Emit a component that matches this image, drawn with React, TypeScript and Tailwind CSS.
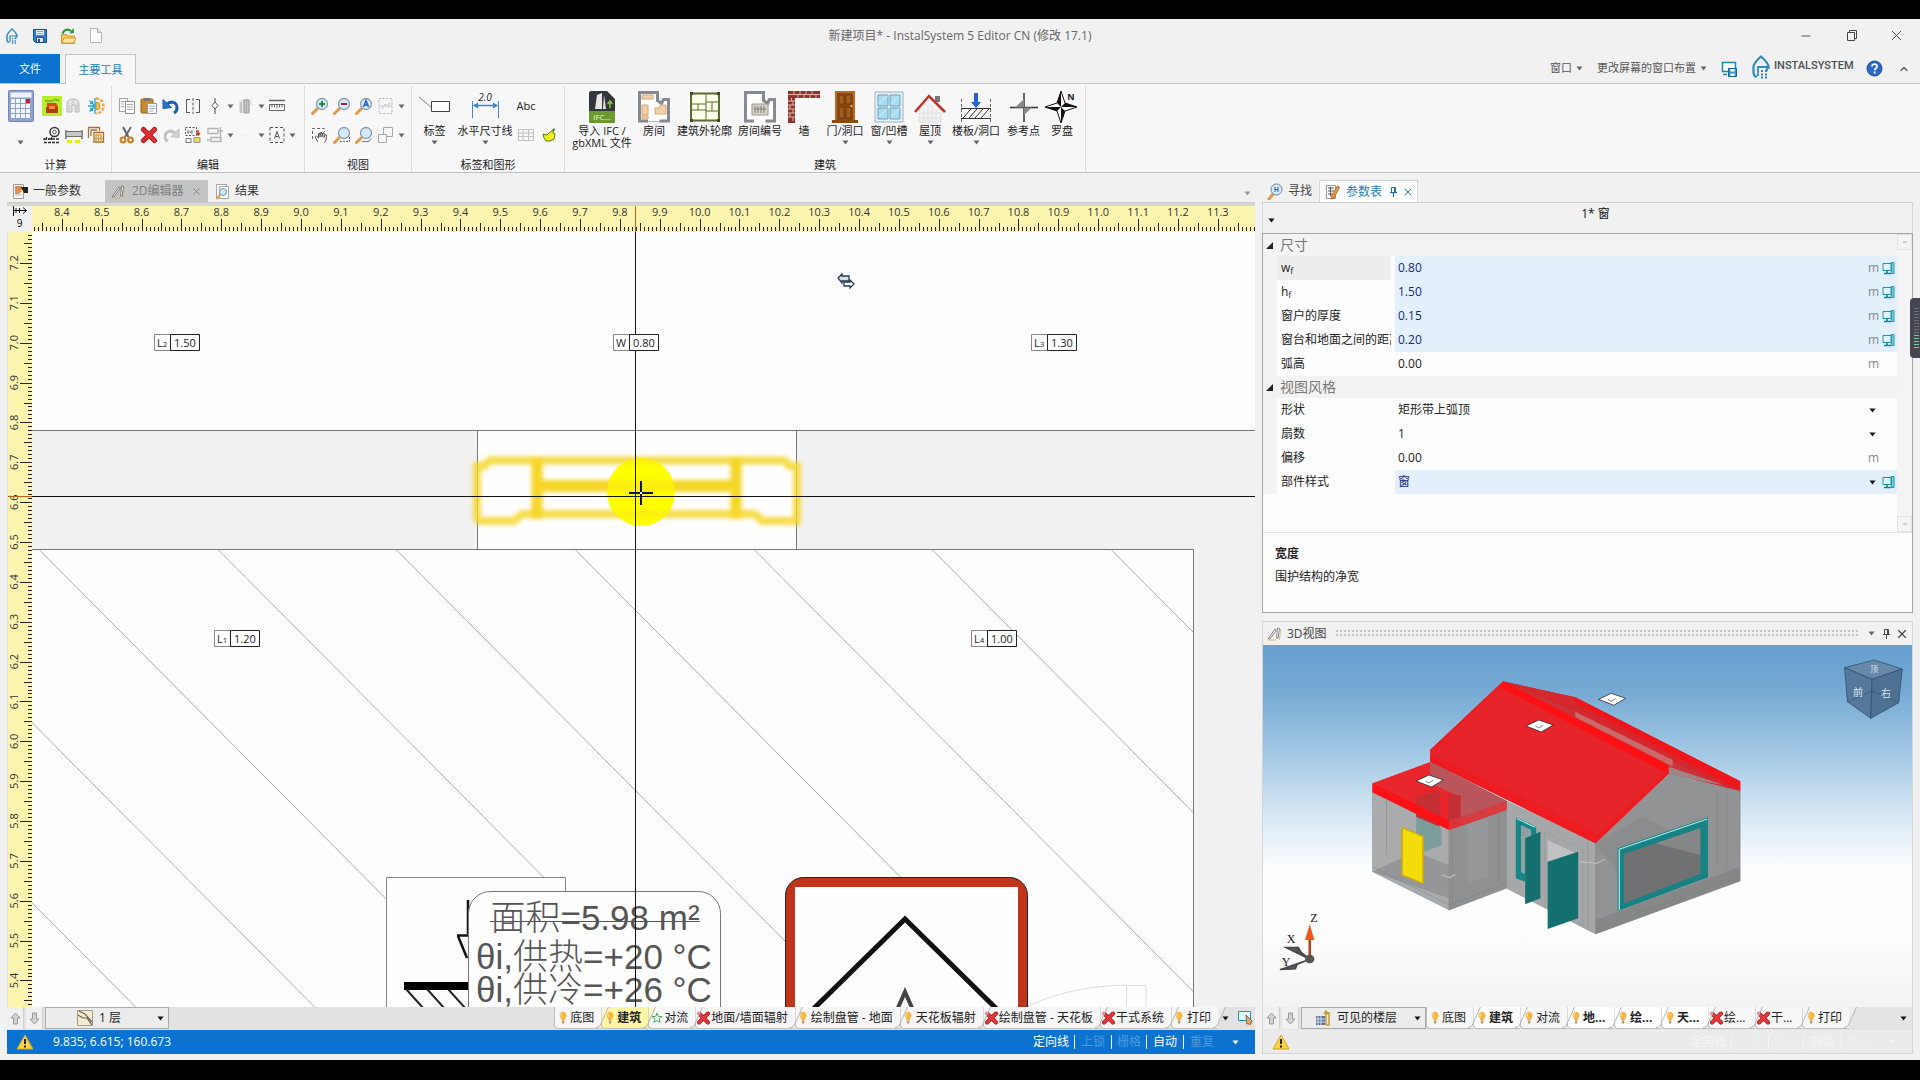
import React from "react";
import { clsx } from "clsx";
import { LuMinus, LuX, LuChevronUp } from "react-icons/lu";

const PX_PER_TENTH = 39.86;

type IconProps = { w?: number; h?: number; children?: React.ReactNode };

const Ic = ({ w = 18, h = 18, children }: IconProps) => (
  <svg
    width={w}
    height={h}
    viewBox={`0 0 ${w} ${h}`}
    fill="none"
    className="shrink-0"
    aria-hidden="true"
  >
    {children}
  </svg>
);

const Caret = ({ color = "#666" }: { color?: string }) => (
  <Ic w={7} h={5}>
    <path d="M0.5 0.5h6L3.5 4.5z" fill={color} />
  </Ic>
);

const Bulb = () => (
  <Ic w={10} h={14}>
    <path d="M5 1a3.4 3.4 0 0 1 2 6l-.6 2H3.8L3.2 7A3.4 3.4 0 0 1 5 1z" fill="#f6b73c" stroke="#e9a02c" strokeWidth=".5" />
    <path d="M4 2.5c-1 .6-1 2-.5 3" stroke="#fff3c4" />
    <path d="M3.9 9.5h2.4v2.5l-1.2 1-1.2-1z" fill="#b9a070" />
  </Ic>
);

const RedX = () => (
  <Ic w={13} h={14}>
    <path d="M2 2.5l9 9M11 2.5l-9 9" stroke="#a81217" strokeWidth="4" strokeLinecap="round" />
    <path d="M2 2.5l9 9M11 2.5l-9 9" stroke="#e8383c" strokeWidth="2.5" strokeLinecap="round" />
  </Ic>
);

const Star = () => (
  <Ic w={12} h={14}>
    <path d="M6 2l1.3 3.4 3.7.2-2.9 2.3 1 3.6L6 9.5l-3.1 2 1-3.6L1 5.6l3.7-.2z" fill="#effbe9" stroke="#4fa564" />
  </Ic>
);

const Warning = () => (
  <Ic w={18} h={16}>
    <path d="M9 1L17 15H1z" fill="#fbd44a" stroke="#d9a21c" strokeLinejoin="round" />
    <path d="M9 5v5M9 11.5v2" stroke="#222" strokeWidth="2" />
  </Ic>
);

const Monitor = () => (
  <Ic w={13} h={14}>
    <path d="M1 2.5h8v7H1z" fill="#d9f5fb" stroke="#1d93ab" />
    <path d="M9.5 1.5h2.5v11H9.500z" fill="#7fd3e0" stroke="#1d93ab" />
    <path d="M5 9v3M2 12.5h7" stroke="#1d7f95" strokeWidth="1.5" />
  </Ic>
);

const Pin = ({ color = "#444" }: { color?: string }) => (
  <Ic w={9} h={12}>
    <path d="M2.5 1.5h4v5h-4zM1 6.5h7M4.5 7v4M5.5 2v4" stroke={color} />
  </Ic>
);

const Pencils = ({ color = "#777" }: { color?: string }) => (
  <Ic w={16} h={15}>
    <path d="M1 13L8 3l1.5 1L3 13z" fill="#eee" stroke={color} />
    <path d="M9.5 12l1-10 2 .3-1.5 10z" fill="#fff" stroke={color} />
    <path d="M1 14h8M13.5 3l-1 11" stroke="#c8b878" />
  </Ic>
);

const SmallSave = () => (
  <Ic w={16} h={16}>
    <path d="M1.5 1.5h13v13h-11l-2-2z" fill="#2f7fd0" stroke="#1b4f8c" />
    <path d="M4 2h8v5H4z" fill="#e8f2fb" />
    <path d="M5 3.5h6M5 5.5h6" stroke="#7fa8cc" />
    <path d="M4.5 9.5h7v5h-7z" fill="#dfe7ef" stroke="#1b4f8c" />
    <path d="M6 11h2v3H6z" fill="#1b4f8c" />
  </Ic>
);

const OpenFolder = () => (
  <Ic w={17} h={18}>
    <path d="M1.5 7.5h5l1 1.5h7v7.5h-13z" fill="#f2c55b" stroke="#cb9a2e" />
    <path d="M2 16l2-5h12l-2 5z" fill="#fbe39a" stroke="#d6a63a" />
    <path d="M2.5 6.5C4 2.5 8 1.5 11 4" stroke="#23973a" strokeWidth="2.2" />
    <path d="M9.5 6.5L14 6l-.5-5z" fill="#23973a" />
  </Ic>
);

const BlankPage = () => (
  <Ic w={14} h={17}>
    <path d="M1.5 1.5h7l4 4v10h-11z" fill="#fff" stroke="#b5b5b5" />
    <path d="M8.5 1.5v4h4" fill="#ddd" stroke="#b5b5b5" />
  </Ic>
);

const HouseLogo = ({ w, h }: { w: number; h: number }) => (
  <svg width={w} height={h} viewBox="0 0 18 24" fill="none" className="shrink-0" aria-hidden="true">
    <path d="M5 21.5H3C1.5 20 1.5 18.5 1.5 17V11C3 7 6 4 9 1.5c3 2.5 6 5.5 7.5 9.5v3" stroke="#2b8ac4" strokeWidth="2.2" />
    <path d="M6 21v-9h9v4" stroke="#2b8ac4" strokeWidth="1.8" />
    <path d="M9 16h2M13 16h2M9 19.5h2M13 19.5h2M9 22.5h2M13 22.5h2" stroke="#2f7fae" strokeWidth="2" />
  </svg>
);

const Calculator = () => (
  <Ic w={26} h={32}>
    <rect x=".5" y=".5" width="25" height="31" rx="1" fill="#8fa3cf" stroke="#7385b5" />
    <rect x="2.5" y="2.5" width="21" height="5" fill="#eef2fa" />
    {[9, 14, 19, 24].map((y) =>
      [3, 8, 13, 18].map((x) => (
        <rect key={`${x}-${y}`} x={x} y={y} width="4" height="4" fill={x === 18 && y === 9 ? "#b02638" : "#f1f4fb"} />
      ))
    )}
  </Ic>
);

const Boiler = () => (
  <Ic w={20} h={20}>
    <rect width="20" height="20" fill="#b6ee2c" />
    <path d="M5 7h9l2 3v6H5z" fill="#d9481c" />
    <path d="M4 11h12v6H4z" fill="#a8420f" />
    <path d="M7 10h6v3H7z" fill="#f58a3c" />
    <path d="M3 5h9M12 3c1 2 4 0 5 2" stroke="#7aa81c" strokeWidth="1.5" />
  </Ic>
);

const GrayPipe = () => (
  <Ic>
    <path d="M2 15V7c0-3 2-5 6-5s6 2 6 5v8h-4V8H7v7z" fill="#e2e2e2" stroke="#b7b7b7" />
    <path d="M4 15V8M12 15V7M8 3v5" stroke="#c9c9c9" />
  </Ic>
);

const SunFrost = () => (
  <Ic>
    <path d="M9 1.5a7.5 7.5 0 0 1 0 15" stroke="#f2a33a" strokeWidth="2.5" strokeDasharray="3 1.5" />
    <path d="M9 5a4 4 0 0 1 0 8z" fill="#f6c14a" stroke="#e08a24" />
    <path d="M8 1v16M1 9h7M2.5 3.5L8 9l-5.5 5.5M3 6.5h2.5V4M3 11.5h2.5V14" stroke="#2aa3c9" strokeWidth="1.3" />
  </Ic>
);

const Gauge = () => (
  <Ic>
    <circle cx="11.5" cy="6" r="4.5" stroke="#333" strokeWidth="1.5" />
    <circle cx="11.5" cy="6" r="1.8" stroke="#555" />
    <path d="M1 12v2M3.5 11v3M6 12v2M8.5 11v3M1 16.5h15M1 13h15" stroke="#333" strokeWidth="1.3" strokeDasharray="3 1" />
  </Ic>
);

const Duct = () => (
  <Ic>
    <path d="M1 4v9M17 4v9" stroke="#777" strokeWidth="1.5" />
    <path d="M1 5.5h16v5H1z" fill="#c9c9c9" stroke="#6e6e6e" />
    <path d="M2 15.5h5M10 15.5h5" stroke="#ecea1c" strokeWidth="3" />
  </Ic>
);

const Coils = () => (
  <Ic>
    <path d="M1.5 12V1.5h11V5M4 10V4h6" stroke="#a0703a" strokeWidth="1.3" />
    <path d="M7 6.5h9.5V16H7z" stroke="#a0703a" strokeWidth="1.3" />
    <path d="M9 16V9h5v7M11.5 9v7M7 12.5h9" stroke="#d8a23c" strokeWidth="1.3" />
  </Ic>
);

const Copy = () => (
  <Ic>
    <path d="M1.5 1.5h8v13h-8z" fill="#fff" stroke="#a3a3a3" />
    <path d="M7.5 4.5h9v12h-9z" fill="#fff" stroke="#8d8d8d" />
    <path d="M9 7.5h6M9 10h6M9 12.5h6M3 4.5h4M3 7h3M3 9.5h3" stroke="#a8a8a8" />
  </Ic>
);

const Paste = () => (
  <Ic>
    <rect x="1" y="2" width="12" height="14" rx="1" fill="#c98a2d" stroke="#94601a" />
    <path d="M4 1h6v3H4z" fill="#777" />
    <path d="M7.5 6.5h9v10h-9z" fill="#fff" stroke="#999" />
    <path d="M9 9h6M9 11.5h6M9 14h4" stroke="#9aaccc" />
  </Ic>
);

const Undo = () => (
  <Ic>
    <path d="M4 8c5-5 11-3 11 3 0 2-1 4-3 5" stroke="#1e5faa" strokeWidth="3" />
    <path d="M1 2.5v9l8.5-1z" fill="#2a78c8" stroke="#1e5faa" />
  </Ic>
);

const Redo = () => (
  <Ic>
    <path d="M14 8C9 3 3 5 3 11c0 2 1 3 2.5 4.5" stroke="#c2c2c2" strokeWidth="3" />
    <path d="M17 3v8.5L9 10.500z" fill="#d2d2d2" stroke="#bbb" />
  </Ic>
);

const Mirror = () => (
  <Ic>
    <path d="M6 2.5H2.5v13H6M12 2.5h3.5v13H12" stroke="#555" />
    <path d="M9 1v16" stroke="#555" strokeDasharray="3 1.5" />
  </Ic>
);

const AxisMark = () => (
  <Ic>
    <path d="M9 1v4M9 12v5" stroke="#444" />
    <path d="M9 5l3 3.5-3 3.5-3-3.5z" fill="#fff" stroke="#555" />
  </Ic>
);

const GrayBlock = () => (
  <Ic>
    <path d="M2 5l3-3h7l3 3v3h-2v8H2z" fill="#e2e2e2" />
    <path d="M7 3h5v13H7z" fill="#c6c6c6" stroke="#9a9a9a" />
    <path d="M4 5v11M9.5 4v11" stroke="#aaa" />
  </Ic>
);

const RulerIcon = () => (
  <Ic>
    <path d="M1 3.5h16" stroke="#666" strokeWidth="1.5" />
    <path d="M1.5 7.5h15v6h-15z" fill="#fff" stroke="#666" />
    <path d="M4 8v2.5M6.5 8v2.5M9 8v3.5M11.5 8v2.5M14 8v2.5" stroke="#666" />
  </Ic>
);

const Scissors = () => (
  <Ic>
    <path d="M5 1l5.5 10M13 1L7 11" stroke="#666" strokeWidth="2" />
    <circle cx="5" cy="14" r="2.4" stroke="#cf7c1c" strokeWidth="2" />
    <circle cx="12.5" cy="14" r="2.4" stroke="#cf7c1c" strokeWidth="2" />
  </Ic>
);

const BigRedX = () => (
  <Ic>
    <path d="M3.5 3.5l11 11M14.5 3.5l-11 11" stroke="#9c1518" strokeWidth="5" strokeLinecap="round" />
    <path d="M3.5 3.5l11 11M14.5 3.5l-11 11" stroke="#dd2f33" strokeWidth="3.5" strokeLinecap="round" />
  </Ic>
);

const Replace = () => (
  <Ic>
    <path d="M1.5 1.5h11v8h-11z" stroke="#555" strokeDasharray="2 1.5" />
    <path d="M4 4v4M8 4v4M4 6h4" stroke="#777" />
    <path d="M14 4v4M12.5 7l1.7 2L16 7" stroke="#c63b1c" strokeWidth="1.5" />
    <path d="M2 12.5h5v4H2z" stroke="#777" />
    <path d="M10 11.5h6v5h-6z" fill="#f3d84a" stroke="#999" />
  </Ic>
);

const Align = () => (
  <Ic>
    <path d="M2 2.5h10v5H2zM5 11.5h10v4H5zM14.5 1v15M1 14h3M12 5h5" stroke="#b4b4b4" strokeWidth="1.3" />
  </Ic>
);

const Faint = () => (
  <Ic>
    <path d="M3 12l4-4 3 2 5-5" stroke="#ececec" />
  </Ic>
);

const SelectA = () => (
  <Ic>
    <path d="M2 1.5h14v15H2z" stroke="#555" strokeDasharray="3 2" />
    <path d="M6.5 12.5L9 5.5l2.5 7M7.5 10.5h3" stroke="#555" />
  </Ic>
);

const Magnifier = ({ children }: { children?: React.ReactNode }) => (
  <Ic>
    <path d="M6.5 11.5L1.5 16.5" stroke="#df9a4c" strokeWidth="3" strokeLinecap="round" />
    <circle cx="11" cy="7" r="5.5" fill="#d4eaf8" stroke="#8d99a8" strokeWidth="1.3" />
    {children}
  </Ic>
);

const ZoomRegion = () => (
  <Ic>
    <path d="M2 1.5h13v15H2z" stroke="#b5b5b5" strokeDasharray="2 1.5" />
    <path d="M5 12l3-5 3 2 2-4M2 9h13" stroke="#c6c6c6" />
  </Ic>
);

const Hand = () => (
  <Ic>
    <path d="M1.5 13V2.5h12V6" stroke="#666" strokeDasharray="3 2" />
    <path d="M7 16l-3-5 1.5-.8L7.5 12V7.5H9V11l.3-4.5h1.5l.2 4.5.8-4h1.4l-.2 4.5 1.3-3 1.2.5L15 14l-1.5 2.5" fill="#fff" stroke="#555" />
  </Ic>
);

const Squares = () => (
  <Ic>
    <path d="M6.5 1.5h9v9h-9z" fill="#f4f4f4" stroke="#a7a7a7" />
    <path d="M1.5 8.5h8v8h-8z" fill="#f8f8f8" stroke="#a7a7a7" />
  </Ic>
);

const TagIcon = () => (
  <Ic w={34} h={32}>
    <path d="M1 6l13 11" stroke="#888" />
    <path d="M13.5 10.5h18v10h-18z" fill="#fff" stroke="#444" />
  </Ic>
);

const DimensionIcon = () => (
  <Ic w={34} h={32}>
    <text x="17" y="10" textAnchor="middle" fontSize="10" fontStyle="italic" fill="#222" fontFamily="Open Sans, sans-serif">
      2.0
    </text>
    <path d="M4.5 10v17M30.5 10v17" stroke="#3a87cc" />
    <path d="M6 14.5h23" stroke="#3a87cc" strokeWidth="1.5" />
    <path d="M5 14.5l5-3v6zM30 14.5l-5-3v6z" fill="#3a87cc" />
  </Ic>
);

const TableIcon = () => (
  <Ic>
    <path d="M1.5 3.5h15v11h-15zM1.5 7h15M1.5 10.5h15M6 3.5v11M11.5 3.5v11" stroke="#c1c1c1" />
  </Ic>
);

const Leaf = () => (
  <Ic w={16}>
    <path d="M2 8l4 1 2-2 5-4-1 4 2 1-1 5-4 2H5l-2-3z" fill="#eeee1c" stroke="#5e7a14" />
    <path d="M11 5l2-3 1 2z" fill="#3f6a14" />
  </Ic>
);

const IfcIcon = () => (
  <Ic w={28} h={32}>
    <path d="M1 2c0-1 1-2 2-2h16l8 8v22c0 1-1 2-2 2H3c-1 0-2-1-2-2z" fill="#33363a" />
    <path d="M1 20h26v10c0 1-1 2-2 2H3c-1 0-2-1-2-2z" fill="#6b9a2e" />
    <path d="M9 4l5-2v16H7zM16 4l2 14h-3z" fill="#e6e6e6" />
    <path d="M22 17v-6M19.5 13l2.5-3 2.5 3" stroke="#8ac33a" strokeWidth="1.5" />
    <text x="14" y="29" textAnchor="middle" fontSize="8" fill="#e6f5c8" fontFamily="Open Sans, sans-serif">
      IFC...
    </text>
  </Ic>
);

const RoomIcon = () => (
  <Ic w={32} h={32}>
    <path d="M10 30H1.5V1.5h18v8l4 3 2-4h5V30h-9" fill="#fff" stroke="#858a92" strokeWidth="3" />
    <path d="M4 4h11v4H4zM4 14h6v10H4zM17 17h5v-3h6v9H17zM4 25h6v3H4z" fill="#f3cfa8" stroke="#d5a679" />
    <path d="M10 30.5h12" stroke="#b9bcc2" />
  </Ic>
);

const OutlineIcon = () => (
  <Ic w={32} h={32}>
    <path d="M2 2.5h28v27H2z" fill="#fbfde9" stroke="#5c6b33" strokeWidth="2" />
    <path d="M17 2v27M2 13h15M2 19h15M17 11h13M17 20h13M9 13v6M23 11v9" stroke="#5c6b33" />
    <path d="M1 1h3v3H1zM28 1h3v3h-3zM1 28h3v3H1zM28 28h3v3h-3z" fill="#3f4a22" />
  </Ic>
);

const RoomNumberIcon = () => (
  <Ic w={32} h={32}>
    <path d="M10 30H1.5V1.5h18v8l4 3 2-4h5V30h-9" fill="#fff" stroke="#858a92" strokeWidth="3" />
    <path d="M8 13h16v11H8z" fill="#d8d3cb" stroke="#9b958b" />
    <path d="M11 15v7M14 15v7M17 15v7M20 15v7M10 18h12" stroke="#7d776d" />
  </Ic>
);

const WallIcon = () => (
  <Ic w={32} h={32}>
    <path d="M0 0h32v7H7v25H0z" fill="#8d332b" />
    <path d="M0 3.5h32M0 10h7M0 14h7M0 18h7M0 22h7M0 26h7M3.5 7v3M5 10v4M2 14v4M5 18v4M2 22v4M5 26v4M6 0v3.5M12 0v3.5M18 0v3.5M24 0v3.5M10 3.5V7M16 3.5V7M22 3.5V7M28 3.5V7" stroke="#e0b4aa" />
  </Ic>
);

const DoorIcon = () => (
  <Ic w={26} h={32}>
    <path d="M3 0h20v30H3z" fill="#b66a22" />
    <path d="M0 29h26v3H0z" fill="#8a4c13" />
    <path d="M5 2h16v27H5z" fill="#8b4a12" />
    <path d="M7 4h5v9H7zM14 4h5v9h-5zM7 16h5v11H7zM14 16h5v11h-5z" fill="#a65e1e" stroke="#6f390b" />
    <circle cx="19.5" cy="15" r="1" fill="#f4d270" />
  </Ic>
);

const WindowIcon = () => (
  <Ic w={30} h={32}>
    <path d="M1 1h28v30H1z" fill="#e4f2f7" stroke="#9ab3bd" />
    <path d="M4 4h10v11H4zM16 4h10v11H16zM4 17h10v11H4zM16 17h10v11H16z" fill="#a8dcf2" stroke="#6f9fb3" />
    <path d="M5 13l8-8M17 13l8-8M5 26l8-8M17 26l8-8" stroke="#b8e4f6" strokeWidth="2" />
  </Ic>
);

const RoofIcon = () => (
  <Ic w={32} h={32}>
    <path d="M5 19L16 8l11 11v12H5z" fill="#f3f3f3" stroke="#cfcfcf" strokeDasharray="2 1" />
    <path d="M10 18v12M14 15v15M18 14v16M22 18v12M6 22h20M6 27h20" stroke="#dedede" />
    <path d="M21 5h5v6h-5z" fill="#777" />
    <path d="M1 21L15 5l16 16" stroke="#b8352a" strokeWidth="2.5" />
  </Ic>
);

const SlabIcon = () => (
  <Ic w={32} h={32}>
    <path d="M1.5 8v24M30.5 8v24" stroke="#666" strokeDasharray="3 2" />
    <path d="M1 17.5h30M1 27.5h30" stroke="#333" />
    <path d="M3 27l8-9M9 27l8-9M15 27l8-9M21 27l8-9" stroke="#333" />
    <path d="M14 2h4v9h3l-5 6-5-6h3z" fill="#2662e0" />
  </Ic>
);

const RefPointIcon = () => (
  <Ic w={30} h={32}>
    <path d="M15 2v29M1 16.5h28" stroke="#333" strokeWidth="1.5" />
    <path d="M15 8v8.5H6zM15 24v-7.5h8z" fill="#8a8a8a" />
  </Ic>
);

const CompassIcon = () => (
  <Ic w={34} h={32}>
    <path d="M16 0l4 12 12 4-12 4-4 12-4-12L0 16l12-4z" fill="#fff" stroke="#111" />
    <path d="M16 0v16l-4-4zM32 16H16l4-4zM16 32V16l4 4zM0 16h16l-4 4z" fill="#111" />
    <text x="26" y="9" textAnchor="middle" fontSize="9" fontWeight="700" fill="#222" fontFamily="Open Sans, sans-serif">
      N
    </text>
  </Ic>
);

type SmallTool = { name: string; icon: React.ReactNode; arrow?: boolean };

const calcTools: SmallTool[][] = [
  [
    { name: "锅炉", icon: <Boiler /> },
    { name: "管道", icon: <GrayPipe /> },
    { name: "冷热", icon: <SunFrost /> },
  ],
  [
    { name: "仪表", icon: <Gauge /> },
    { name: "风管", icon: <Duct /> },
    { name: "盘管", icon: <Coils /> },
  ],
];

const editTools: SmallTool[][] = [
  [
    { name: "复制", icon: <Copy /> },
    { name: "粘贴", icon: <Paste /> },
    { name: "撤销", icon: <Undo /> },
    { name: "镜像", icon: <Mirror /> },
    { name: "轴", icon: <AxisMark />, arrow: true },
    { name: "块", icon: <GrayBlock />, arrow: true },
    { name: "尺子", icon: <RulerIcon /> },
  ],
  [
    { name: "剪切", icon: <Scissors /> },
    { name: "删除", icon: <BigRedX /> },
    { name: "重做", icon: <Redo /> },
    { name: "替换", icon: <Replace /> },
    { name: "对齐", icon: <Align />, arrow: true },
    { name: "连接", icon: <Faint />, arrow: true },
    { name: "全选", icon: <SelectA />, arrow: true },
  ],
];

const viewTools: SmallTool[][] = [
  [
    {
      name: "放大",
      icon: (
        <Magnifier>
          <path d="M11 4v6M8 7h6" stroke="#1c8a3c" strokeWidth="2" />
        </Magnifier>
      ),
    },
    {
      name: "缩小",
      icon: (
        <Magnifier>
          <path d="M8 7h6" stroke="#9a2638" strokeWidth="2" />
        </Magnifier>
      ),
    },
    {
      name: "全部",
      icon: (
        <Magnifier>
          <path d="M8.5 10L11 3.5l2.5 6.5M9.5 8h3" stroke="#2460b8" strokeWidth="1.5" />
        </Magnifier>
      ),
    },
    { name: "区域", icon: <ZoomRegion />, arrow: true },
  ],
  [
    { name: "平移", icon: <Hand /> },
    {
      name: "窗口缩放",
      icon: (
        <Magnifier>
          <path d="M7 15.5h9.5V11" stroke="#777" strokeDasharray="2 1" />
        </Magnifier>
      ),
    },
    {
      name: "选择缩放",
      icon: (
        <Magnifier>
          <path d="M7 15.5h7l2.5-3" stroke="#777" />
        </Magnifier>
      ),
    },
    { name: "层叠", icon: <Squares />, arrow: true },
  ],
];

const buildTools = [
  { label: ["导入 IFC /", "gbXML 文件"], icon: <IfcIcon />, width: "w-[68px]" },
  { label: ["房间"], icon: <RoomIcon />, width: "w-9" },
  { label: ["建筑外轮廓"], icon: <OutlineIcon />, width: "w-[65px]" },
  { label: ["房间编号"], icon: <RoomNumberIcon />, width: "w-[46px]" },
  { label: ["墙"], icon: <WallIcon />, width: "w-[42px]" },
  { label: ["门/洞口"], icon: <DoorIcon />, width: "w-10", arrow: true },
  { label: ["窗/凹槽"], icon: <WindowIcon />, width: "w-12", arrow: true },
  { label: ["屋顶"], icon: <RoofIcon />, width: "w-[34px]", arrow: true },
  { label: ["楼板/洞口"], icon: <SlabIcon />, width: "w-[58px]", arrow: true },
  { label: ["参考点"], icon: <RefPointIcon />, width: "w-[37px]" },
  { label: ["罗盘"], icon: <CompassIcon />, width: "w-10" },
];

const SmallTools = ({ rows }: { rows: SmallTool[][] }) => (
  <div className="flex flex-col gap-[7px] pt-[9px]">
    {rows.map((row, i) => (
      <div key={i} className="flex h-[22px] items-center">
        {row.map((tool) => (
          <React.Fragment key={tool.name}>
            <button aria-label={tool.name} className="flex w-[22px] justify-center">
              {tool.icon}
            </button>
            {tool.arrow && (
              <span className="flex w-[9px] justify-center">
                <Caret />
              </span>
            )}
          </React.Fragment>
        ))}
      </div>
    ))}
  </div>
);

const BigTool = ({
  label,
  icon,
  width,
  arrow,
}: {
  label: string[];
  icon: React.ReactNode;
  width: string;
  arrow?: boolean;
}) => (
  <button className={clsx("flex shrink-0 flex-col items-center pt-[5px]", width)}>
    {icon}
    <span className="mt-[2px] flex flex-col items-center text-[11px] leading-[12px] whitespace-nowrap">
      {label.map((line) => (
        <span key={line}>{line}</span>
      ))}
    </span>
    {arrow && (
      <span className="mt-[3px]">
        <Caret />
      </span>
    )}
  </button>
);

const RibbonGroup = ({
  title,
  width,
  children,
}: {
  title: string;
  width: string;
  children: React.ReactNode;
}) => (
  <div className={clsx("mt-[2px] flex shrink-0 flex-col border-r border-[#dcdcdc]", width)}>
    <div className="flex flex-1">{children}</div>
    <div className="text-center text-[11px] leading-[14px]">{title}</div>
  </div>
);

const Header = () => (
  <header>
    <div className="grid h-[35px] grid-cols-[1fr_auto_1fr] items-center pb-[2px]">
      <div className="flex items-center gap-3 pl-[6px]">
        <HouseLogo w={12} h={16} />
        <button aria-label="保存" className="ml-[2px]">
          <SmallSave />
        </button>
        <button aria-label="打开">
          <OpenFolder />
        </button>
        <button aria-label="新建">
          <BlankPage />
        </button>
      </div>
      <h1 className="text-xs text-[#666]">新建项目* - InstalSystem 5 Editor CN (修改 17.1)</h1>
      <div className="flex items-center justify-end pr-[15px] text-[#444]">
        <button aria-label="最小化" className="flex w-[46px] justify-end">
          <LuMinus size={14} strokeWidth={1.5} />
        </button>
        <button aria-label="还原" className="flex w-[46px] justify-end">
          <Ic w={13} h={13}>
            <path d="M1.5 3.5h7v8h-7zM3.5 3.5v-2h7v8h-2" stroke="#444" />
          </Ic>
        </button>
        <button aria-label="关闭" className="flex w-[46px] justify-end">
          <LuX size={17} strokeWidth={1.3} />
        </button>
      </div>
    </div>
    <nav className="flex h-[30px] items-stretch border-b border-[#c3c3c3] text-[11px]">
      <button className="w-[60px] bg-[#0b72cf] pt-px text-white">文件</button>
      <button className="-mb-px ml-[5px] w-[71px] border border-b-0 border-[#c3c3c3] bg-[#f7f7f7] pt-px text-[#1b7cb5]">
        主要工具
      </button>
      <div className="ml-auto flex items-center pr-[10px] text-[#555]">
        <button className="flex items-center gap-1">
          窗口 <Caret />
        </button>
        <button className="ml-[14px] flex items-center gap-1">
          更改屏幕的窗口布置 <Caret />
        </button>
        <button aria-label="保存布局" className="ml-[14px]">
          <Ic w={16} h={16}>
            <path d="M1.5 1.5h13v9h-13zM6 13.5h-4" fill="#fff" stroke="#1d86ae" strokeWidth="1.5" />
            <path d="M7.5 7.5h8v8h-8z" fill="#4a93cc" stroke="#1c5f95" />
            <path d="M9.5 8h4v2.5h-4zM9.5 12.5h4V15h-4z" fill="#fff" />
          </Ic>
        </button>
        <a href="#instalsystem" className="ml-[15px] flex items-center gap-[4px] pb-1">
          <HouseLogo w={18} h={24} />
          <span className="w-[82px] font-['Roboto',sans-serif] text-[11px] font-medium text-[#4a4f55]">INSTALSYSTEM</span>
        </a>
        <button aria-label="帮助" className="ml-[10px]">
          <Ic w={17} h={17}>
            <circle cx="8.5" cy="8.5" r="7.5" fill="#2a68c4" stroke="#184c9c" />
            <path d="M6 6.5c.2-3.2 5.2-3 5 0 0 1.8-2.3 1.8-2.3 3.8M8.7 11.5v2" stroke="#fff" strokeWidth="1.8" />
          </Ic>
        </button>
        <button aria-label="折叠功能区" className="ml-[15px]">
          <LuChevronUp size={12} strokeWidth={2.5} />
        </button>
      </div>
    </nav>
    <div className="flex h-[89px] border-b border-[#c0c0c0] bg-[#f7f7f7] text-[#222]">
      <RibbonGroup title="计算" width="w-28">
        <div className="flex w-[41px] flex-col items-center gap-[18px] pt-[4px]">
          <button aria-label="计算">
            <Calculator />
          </button>
          <Caret />
        </div>
        <SmallTools rows={calcTools} />
      </RibbonGroup>
      <RibbonGroup title="编辑" width="w-[193px]">
        <div className="pl-1">
          <SmallTools rows={editTools} />
        </div>
      </RibbonGroup>
      <RibbonGroup title="视图" width="w-[107px]">
        <div className="pl-1">
          <SmallTools rows={viewTools} />
        </div>
      </RibbonGroup>
      <RibbonGroup title="标签和图形" width="w-[153px]">
        <BigTool label={["标签"]} icon={<TagIcon />} width="w-[45px]" arrow />
        <BigTool label={["水平尺寸线"]} icon={<DimensionIcon />} width="w-[56px]" arrow />
        <div className="grid grid-cols-2 content-start gap-y-[7px] pt-[9px]">
          <button className="h-[22px] w-[26px] text-[11px]">Abc</button>
          <span />
          <button aria-label="表格" className="flex h-[22px] w-[26px] items-center justify-center">
            <TableIcon />
          </button>
          <button aria-label="图形" className="flex h-[22px] w-[20px] items-center justify-center">
            <Leaf />
          </button>
        </div>
      </RibbonGroup>
      <RibbonGroup title="建筑" width="w-[521px]">
        <div className="flex pl-[3px]">
          {buildTools.map((tool) => (
            <BigTool key={tool.label[0]} {...tool} />
          ))}
        </div>
      </RibbonGroup>
    </div>
  </header>
);

const tickLength = (i: number) => (i % 10 === 0 ? 12 : i % 5 === 0 ? 8 : 4);

const HorizontalRuler = () => {
  // 9.0 sits 269px from the left edge of the drawing area
  const ticks = Array.from({ length: 420 }, (_, i) => i - 67);
  return (
    <div className="min-w-0 overflow-x-clip">
      <svg className="h-[26px] w-full overflow-visible bg-[#fbf5b0]" aria-hidden="true">
        <path
          d={ticks.map((t) => `M${Math.round(269 + (t * PX_PER_TENTH) / 10)}.5 ${25 - tickLength(t)}V25`).join("")}
          stroke="#222"
        />
        {ticks
          .filter((t) => t % 10 === 0 && t <= 230)
          .map((t) => (
            <text key={t} x={269 + (t * PX_PER_TENTH) / 10} y={10} textAnchor="middle" fontSize="11" fill="#333">
              {(9 + t / 100).toFixed(1)}
            </text>
          ))}
        <path d="M603.5 0V26" stroke="#b5651d" />
      </svg>
    </div>
  );
};

const VerticalRuler = () => {
  const ticks = Array.from({ length: 320 }, (_, i) => i - 7);
  return (
    <svg className="h-full w-[24px] bg-[#fbf5b0]" aria-hidden="true">
      <path
        d={ticks.map((t) => `M${24 - tickLength(t)} ${Math.round(31 + (t * PX_PER_TENTH) / 10)}.5H24`).join("")}
        stroke="#222"
      />
      {ticks
        .filter((t) => t % 10 === 0 && t <= 180)
        .map((t) => {
          const y = 31 + (t * PX_PER_TENTH) / 10;
          return (
            <text key={t} x={10} y={y} transform={`rotate(-90 10 ${y})`} textAnchor="middle" fontSize="11" fill="#333">
              {(7.2 - t / 100).toFixed(1)}
            </text>
          );
        })}
      <path d="M0 264.5H24" stroke="#b5651d" />
    </svg>
  );
};

const dimensions = [
  { name: "L", sub: "2", value: "1.50", x: 154, y: 334 },
  { name: "W", sub: "", value: "0.80", x: 613, y: 334 },
  { name: "L", sub: "3", value: "1.30", x: 1031, y: 334 },
  { name: "L", sub: "1", value: "1.20", x: 214, y: 630 },
  { name: "L", sub: "4", value: "1.00", x: 971, y: 630 },
];

const FloorPlan = () => (
  <svg className="h-full w-full bg-[#fdfdfd]" role="img" aria-label="2D编辑器">
    <defs>
      <filter id="glow" x="-10%" y="-30%" width="120%" height="160%">
        <feGaussianBlur stdDeviation="2" />
      </filter>
      <clipPath id="room">
        <rect x="0" y="549" width="1193" height="1200" />
      </clipPath>
    </defs>
    <g transform="translate(-32 -232)" fill="none">
      <path d="M0 430.5H2600V2000H1193V549.5H0z" fill="#f1f1f1" />
      <path d="M0 430.5H2600M0 549.5H1193.5V2000" stroke="#777" />
      <rect x="477.5" y="430.5" width="319" height="119" fill="#fefefe" stroke="#777" />
      <g clipPath="url(#room)" stroke="#acacac">
        {[-498, -319, -140, 39, 218, 396, 575, 754, 932, 1111].map((x) => (
          <path key={x} d={`M${x} 549.5l1400 1409`} />
        ))}
      </g>

      <path d="M386.5 1200V877.5H565.5V1200" fill="#fdfdfd" stroke="#888" />
      <path d="M468 900V934M457 935.5H468M458 936l9 22" stroke="#111" strokeWidth="2.5" />
      <path d="M404 982h66v8h-66z" fill="#000" />
      <path d="M406 989l18 20M427 989l18 20M448 989l18 20" stroke="#222" strokeWidth="2" />

      <rect x="785.5" y="877.5" width="242" height="320" rx="18" fill="#c0341c" stroke="#222" />
      <path d="M795 887h223v400H795z" fill="#fefefe" />
      <path d="M795 1027L905 919l110 108" stroke="#111" strokeWidth="5" />
      <path d="M897 1010l8-18 8 18" stroke="#444" strokeWidth="4" />
      <path d="M1031 1005c30-14 60-19 95-20M1126.5 985v30M1126 985.5h20v30" stroke="#dcdcdc" />

      <circle cx="641" cy="492" r="34" fill="#ffff00" />
      <g filter="url(#glow)" stroke="#f5d628" strokeWidth="8">
        <path d="M477 522V466H484L490 460.5H784L790 466H797V521H762L755 514H522L514 521H477" opacity=".85" />
        <path d="M537 457V519M736 457V519" strokeWidth="11" />
        <path d="M537 486H736" strokeWidth="12" />
      </g>
      <circle cx="641" cy="492" r="34" fill="#ffff00" opacity=".6" />

      <rect x="468.5" y="891.5" width="252" height="300" rx="22" fill="#fefefe" stroke="#777" />
      <g className="font-['Liberation_Sans','Noto_Sans_CJK_SC',sans-serif]" fontSize="35" fontWeight="300" fill="#555" textAnchor="middle">
        <text x="595" y="930">面积=5.98 m²</text>
        <text x="594" y="969">θi,供热=+20 °C</text>
        <text x="594" y="1002">θi,供冷=+26 °C</text>
      </g>
      <path d="M490 921.5H700" stroke="#555" />

      <path d="M635.5 200V1500M0 496.5H2600" stroke="#111" />
      <path d="M641 481v24M629 493h24" stroke="#10106e" strokeWidth="2" />
      <path d="M640 492h2v2h-2z" fill="#fff" />

      {dimensions.map((d) => (
        <g key={d.value} fontSize="11" fill="#222">
          <path d={`M${d.x + 0.5} ${d.y + 0.5}h16v16h-16z`} fill="#fff" stroke="#888" />
          <path d={`M${d.x + 16.5} ${d.y + 0.5}h29v16h-29z`} fill="#fff" stroke="#222" />
          <text x={d.x + 3} y={d.y + 13}>
            {d.name}
            <tspan fontSize="8">{d.sub}</tspan>
          </text>
          <text x={d.x + 20} y={d.y + 13}>
            {d.value}
          </text>
        </g>
      ))}

      <path d="M838 278l4-4v2h7v5h-7v2z" fill="#cfe0ee" stroke="#2c3b4d" strokeWidth="1.3" />
      <path d="M854 284l-4-4v2h-6v4h6v2z" fill="#fff" stroke="#2c3b4d" strokeWidth="1.3" />
    </g>
  </svg>
);

type Layer = { name: string; mark: "bulb" | "x" | "star"; active?: boolean; bold?: boolean };

const editorLayers: Layer[] = [
  { name: "底图", mark: "bulb" },
  { name: "建筑", mark: "bulb", active: true, bold: true },
  { name: "对流", mark: "star" },
  { name: "地面/墙面辐射", mark: "x" },
  { name: "绘制盘管 - 地面", mark: "bulb" },
  { name: "天花板辐射", mark: "bulb" },
  { name: "绘制盘管 - 天花板", mark: "x" },
  { name: "干式系统", mark: "x" },
  { name: "打印", mark: "bulb" },
];

const viewLayers: Layer[] = [
  { name: "底图", mark: "bulb" },
  { name: "建筑", mark: "bulb", bold: true },
  { name: "对流", mark: "bulb" },
  { name: "地...", mark: "bulb", bold: true },
  { name: "绘...", mark: "bulb", bold: true },
  { name: "天...", mark: "bulb", bold: true },
  { name: "绘...", mark: "x" },
  { name: "干...", mark: "x" },
  { name: "打印", mark: "bulb" },
];

const marks = { bulb: <Bulb />, x: <RedX />, star: <Star /> };

const LayerTabs = ({ layers, className }: { layers: Layer[]; className?: string }) => (
  <div className={clsx("flex", className)}>
    {layers.map((layer) => (
      <button
        key={layer.name + layer.mark}
        className={clsx(
          "relative flex h-[22px] min-w-[47px] items-center rounded-bl border-b border-l border-[#bdbdbd] pr-[7px] text-xs whitespace-nowrap text-[#222]",
          layer.active ? "bg-[#fcf7a4]" : layer.bold ? "bg-white" : "bg-[#f6f6f6]",
          layer.bold && "font-bold"
        )}
      >
        <span className="flex w-[15px] justify-center">{marks[layer.mark]}</span>
        {layer.name}
        <svg className="absolute top-0 -right-[8px] z-10 h-[22px] w-[15px]" aria-hidden="true">
          <path d="M0 0h15L5 20l-5 2z" fill={layer.active ? "#fcf7a4" : layer.bold ? "#fff" : "#f6f6f6"} opacity=".5" />
          <path d="M14.5 0L6 19 1 21.5" fill="none" stroke="#b5b5b5" />
        </svg>
      </button>
    ))}
  </div>
);

const FloorArrows = () => (
  <>
    {["上一层", "下一层"].map((name, i) => (
      <button
        key={name}
        aria-label={name}
        className="mr-[2px] flex w-[17px] items-center justify-center border-r border-[#cfcfcf] bg-[#f1f1f1]"
      >
        <Ic w={11} h={13}>
          <path
            d={i === 0 ? "M5.5 1l4.5 5H7.5v6h-4V6H1z" : "M5.5 12L10 7H7.5V1h-4v6H1z"}
            fill="#d2d2d2"
            stroke="#9a9a9a"
          />
        </Ic>
      </button>
    ))}
  </>
);

const FloorSelect = ({
  value,
  icon,
  width,
  padding,
}: {
  value: string;
  icon: React.ReactNode;
  width: string;
  padding: string;
}) => (
  <label className={clsx("flex shrink-0 items-center gap-[6px] border border-[#a9a9a9] bg-[#ececec] pr-1", width, padding)}>
    {icon}
    <select aria-label="楼层" className="w-0 flex-1 appearance-none bg-transparent text-xs text-[#222]">
      <option>{value}</option>
    </select>
    <Caret color="#111" />
  </label>
);

const EditorPane = () => (
  <section className="flex min-h-0 min-w-0 flex-col">
    <div className="flex h-[30px] items-end border-b border-[#c9c9c9] text-xs text-[#333]">
      <button className="flex h-[22px] w-[98px] items-center gap-[5px] pl-[5px]">
        <Ic w={16} h={17}>
          <path d="M1.5 1.5h10v14h-10z" fill="#fff" stroke="#999" />
          <path d="M3 3h7v4l-3 4H3z" fill="#e08a4a" />
          <path d="M3 9h7M3 12h7" stroke="#aaa" />
          <path d="M9 4h7v6H12z" fill="#222" />
        </Ic>
        一般参数
      </button>
      <div className="flex h-[22px] w-[103px] items-center bg-[#c4c4c4] pl-[6px] text-[#808080]">
        <button className="flex items-center gap-[5px]">
          <Pencils />
          2D编辑器
        </button>
        <button aria-label="关闭2D编辑器" className="ml-[7px]">
          <LuX size={11} />
        </button>
      </div>
      <button className="flex h-[22px] items-center gap-[5px] pl-[7px]">
        <Ic w={15} h={17}>
          <path d="M1.5 1.5h10v13h-10z" fill="#fff" stroke="#a5a5a5" />
          <path d="M4.5 3.5h9v12h-9z" fill="#fff" stroke="#a5a5a5" />
          <circle cx="8" cy="9" r="3.5" fill="#cdeaf5" stroke="#6b93a8" />
          <path d="M5 12l-3.5 4" stroke="#df9a4c" strokeWidth="2" />
        </Ic>
        结果
      </button>
      <span className="mb-[6px] ml-auto pr-1">
        <Caret color="#999" />
      </span>
    </div>
    <div className="h-[3px] shrink-0 bg-[#d6d8d0]" />
    <div className="grid min-h-0 flex-1 grid-cols-[25px_1fr] grid-rows-[26px_1fr]">
      <div className="flex flex-col items-center gap-px bg-[#f0f0f0] text-[10px] leading-[12px]">
        <Ic w={17} h={10}>
          <path d="M2.5 0v10M2 4.5h13M8.5 2v5M12 1.5l3.5 3-3.5 3M5 2v5" stroke="#111" />
        </Ic>
        9
      </div>
      <HorizontalRuler />
      <div className="overflow-hidden border-l border-[#ddd]">
        <VerticalRuler />
      </div>
      <div className="overflow-hidden">
        <FloorPlan />
      </div>
    </div>
    <div className="flex h-[23px] shrink-0 bg-[#e2e2e2] pb-px">
      <FloorArrows />
      <FloorSelect
        value="1 层"
        width="w-[124px]"
        padding="pl-[31px]"
        icon={
          <Ic w={16} h={16}>
            <path d="M.5.5h15v15H.5z" fill="#f3ecd2" stroke="#a89c78" />
            <path d="M1 5l5 3h4l5 7M2 1l6 3 7 8" stroke="#6a6450" strokeWidth="1.2" />
          </Ic>
        }
      />
      <LayerTabs layers={editorLayers} className="ml-auto" />
      <div className="flex items-center gap-[8px] pr-px pl-[4px]">
        <Caret color="#111" />
        <button aria-label="图层设置">
          <Ic w={17} h={16}>
            <path d="M1.5 1.5h12v9h-12z" fill="#e9fbff" stroke="#2394a9" />
            <path d="M9 5l6 6-1.5 3.5-4-1z" fill="#d9a878" stroke="#8a6238" />
          </Ic>
        </button>
      </div>
    </div>
    <footer className="flex h-[24px] shrink-0 items-center bg-[#0b72cf] pr-4 pl-[9px] text-xs text-white">
      <Warning />
      <span className="ml-[19px]">9.835; 6.615; 160.673</span>
      <div className="ml-auto flex items-center divide-x divide-white leading-[14px]">
        <button className="pr-[5px]">定向线</button>
        <button className="px-[6px] text-[#4c9be0]">上锁</button>
        <button className="px-[5px] text-[#4c9be0]">栅格</button>
        <button className="px-[6px]">自动</button>
        <button className="px-[6px] text-[#4c9be0]">重复</button>
      </div>
      <span className="ml-[12px]">
        <Caret color="#fff" />
      </span>
    </footer>
  </section>
);

type Property = {
  id: string;
  label: React.ReactNode;
  value: string;
  kind: "number" | "select";
  linked?: boolean;
  selected?: boolean;
};

const sizeProperties: Property[] = [
  { id: "wf", label: <>w<sub className="bottom-[-2px] text-[9px]">f</sub></>, value: "0.80", kind: "number", linked: true, selected: true },
  { id: "hf", label: <>h<sub className="bottom-[-2px] text-[9px]">f</sub></>, value: "1.50", kind: "number", linked: true },
  { id: "thickness", label: "窗户的厚度", value: "0.15", kind: "number", linked: true },
  { id: "sill", label: "窗台和地面之间的距离", value: "0.20", kind: "number", linked: true },
  { id: "arc", label: "弧高", value: "0.00", kind: "number" },
];

const viewProperties: Property[] = [
  { id: "shape", label: "形状", value: "矩形带上弧顶", kind: "select" },
  { id: "sashes", label: "扇数", value: "1", kind: "select" },
  { id: "offset", label: "偏移", value: "0.00", kind: "number" },
  { id: "style", label: "部件样式", value: "窗", kind: "select", linked: true },
];

const PropertyRow = ({ id, label, value, kind, linked, selected }: Property) => (
  <div className="flex h-6 items-center text-xs">
    <div className="h-full w-[14px] shrink-0 bg-[#f3f3f3]" />
    <label
      htmlFor={id}
      className={clsx(
        "mr-1 h-full w-[114px] shrink-0 overflow-hidden pl-1 leading-6 whitespace-nowrap text-[#222]",
        selected && "bg-[#ededed]"
      )}
    >
      {label}
    </label>
    <div className={clsx("flex h-full flex-1 items-center pr-[2px] pl-[3px]", linked ? "bg-[#e3f0fb] text-[#14287d]" : "text-[#222]")}>
      {kind === "select" ? (
        <>
          <select id={id} className="w-0 flex-1 appearance-none bg-transparent">
            <option>{value}</option>
          </select>
          <Caret color="#111" />
        </>
      ) : (
        <>
          <input id={id} defaultValue={value} className="w-0 flex-1 bg-transparent" />
          <span className="text-[#888]">m</span>
        </>
      )}
      <span className={clsx("flex w-[16px] justify-end", kind === "select" && "ml-[3px]")}>{linked && <Monitor />}</span>
    </div>
  </div>
);

const GroupRow = ({ title }: { title: string }) => (
  <div className="flex h-[22px] items-center gap-[7px] bg-[#f3f3f3] pl-[3px] text-sm text-[#777]">
    <Ic w={7} h={7}>
      <path d="M7 0v7H0z" fill="#222" />
    </Ic>
    {title}
  </div>
);

const PropertiesPane = () => (
  <section className="flex shrink-0 flex-col">
    <div className="flex h-[30px] items-end border-b border-[#cfcfcf] text-xs">
      <button className="flex h-[22px] w-[57px] items-center gap-[5px] pl-[5px] text-[#444]">
        <Ic w={16} h={17}>
          <path d="M6 11l-4 5" stroke="#df9a4c" strokeWidth="3" strokeLinecap="round" />
          <circle cx="9.5" cy="6.5" r="5.5" fill="#d4eaf8" stroke="#6d8499" />
          <path d="M8 4v5M11 4v5M8 6.5h3" stroke="#2a5a8a" />
        </Ic>
        寻找
      </button>
      <div className="flex h-[22px] items-center border border-b-0 border-[#d0d6da] bg-white pr-[3px] pl-[5px] text-[#1b7cb5]">
        <button className="flex items-center gap-[5px]">
          <Ic w={16} h={16}>
            <path d="M1.5 1.5h9v13h-9z" fill="#fff" stroke="#999" />
            <path d="M3 4h6M3 7h6M3 10h6M5.5 3v9" stroke="#555" />
            <path d="M14.5 3L9 14l-3 1 .5-3L12.5 2z" fill="#f09a3a" stroke="#b8642a" />
          </Ic>
          参数表
        </button>
        <button aria-label="固定" className="ml-[7px]">
          <Pin color="#1b6ea5" />
        </button>
        <button aria-label="关闭参数表" className="ml-[4px]">
          <LuX size={12} />
        </button>
      </div>
    </div>
    <div className="flex h-[30px] items-center border-x border-[#d5d5d5] pl-[5px]">
      <span className="pt-[4px]">
        <Caret color="#111" />
      </span>
      <h2 className="flex-1 pb-[8px] pl-[4px] text-center text-xs text-[#111]">1* 窗</h2>
    </div>
    <div className="border border-[#a6a6a6] bg-[#fdfdfd]">
      <div className="flex">
        <div className="flex-1">
          <GroupRow title="尺寸" />
          {sizeProperties.map((p) => (
            <PropertyRow key={p.id} {...p} />
          ))}
          <GroupRow title="视图风格" />
          {viewProperties.map((p) => (
            <PropertyRow key={p.id} {...p} />
          ))}
          <div className="h-[38px]" />
        </div>
        <div className="flex w-[15px] flex-col justify-between bg-[#f4f4f4]">
          {["向上滚动", "向下滚动"].map((name) => (
            <button key={name} aria-label={name} className="flex h-4 items-center justify-center border border-[#e2e2e2]">
              <Ic w={6} h={6}>
                <path d="M1 3h4" stroke="#ccc" strokeWidth="2" />
              </Ic>
            </button>
          ))}
        </div>
      </div>
      <div className="flex h-20 flex-col gap-[7px] border-t border-[#e2e2e2] px-3 pt-[13px] text-xs leading-4 text-[#222]">
        <strong>宽度</strong>
        <p>围护结构的净宽</p>
      </div>
    </div>
  </section>
);

const House = () => (
  <svg className="h-full w-full" role="img" aria-label="3D视图">
    <g transform="translate(-8 -35) scale(.4241 .3333)">
      <g strokeLinejoin="round">
        <path d="M277 547l181 113v240L277 785z" fill="#a9abac" stroke="#77797a" />
        <path d="M277 785l100-60 80 40v100zM458 740l135 90-135 70z" fill="#8b8d8e" opacity=".7" />
        <path d="M458 660l135-60v235l-135 65z" fill="#8f9193" stroke="#727476" />
        <path d="M500 560h50v240l-50 20z" fill="#999b9d" opacity=".6" />
        <path d="M380 615l60 40v50l-40 20-20-10z" fill="#7d9c9c" />
        <path d="M593 573l210 127v272L593 835z" fill="#a5a7a8" stroke="#7b7d7e" />
        <path d="M803 700l172-205 169 47v271L803 972z" fill="#919394" stroke="#727476" />
        <path d="M803 930l341-160v43L803 972z" fill="#7e8081" opacity=".6" />
        <path d="M803 700l110-80 150 90-200 90z" fill="#7e8082" opacity=".35" />
        <path d="M1112 535v230M1090 545v225M1112 765l32 30M310 570v165M575 600v215M465 665v225M785 695v260M803 955l341-155M277 770l181 115 135-65" fill="none" stroke="#777" />
        <path d="M347 653l49 27v140l-49-25z" fill="#f4dc0a" stroke="#cfae12" strokeWidth="4" />
        <path d="M585 214l170 48 389 252v28l-169-50z" fill="#cb3239" />
        <path d="M585 214l170 48 389 252v28l-40-12-349-226z" fill="#d4282e" />
        <path d="M755 262l389 252v28L755 280z" fill="#ee161b" />
        <path d="M755 305l230 145v20L755 322z" fill="#c9696a" />
        <path d="M975 470l130 55-130-30z" fill="#9d8584" />
        <path d="M585 214l390 251v27L803 700 413 456v-36z" fill="#e62429" />
        <path d="M585 214l390 251v27L577 232z" fill="#fc1014" />
        <path d="M413 428L585 222v-8L413 420zM803 668l-390-236v24l390 244 172-208v-10L803 680z" fill="#ee1b20" />
        <path d="M413 456L277 520v27l181 113 135-60v-27z" fill="#e8262b" />
        <path d="M413 456l180 117v27l-110 45v-85l-70-40z" fill="#ba555b" />
        <path d="M380 560l55-20v110l-55-30zM455 555h30v85l-30 10z" fill="#c42f35" />
        <path d="M277 520l181 112v28L277 547z" fill="#fa1217" />
        <path d="M458 632l135-59v27l-135 60z" fill="#e0343a" opacity=".8" />
        <path d="M413 456l180 117-135 60" fill="none" stroke="#8a6a6c" />
        <path d="M615 622l48 28v25l-26 10v130l-22-10z" fill="#168585" />
        <path d="M627 645l24 14v20l-14 8v105l-10-5z" fill="#8fa0a0" />
        <path d="M617 626l44 26" stroke="#b6f0f0" strokeWidth="3" />
        <path d="M683 665l90 55v225l-90-58z" fill="none" stroke="#8b8d8e" />
        <path d="M690 690l70 42-70 25z" fill="#bfc1c2" />
        <path d="M637 685l36-20v200l-36 18z" fill="#14706f" />
        <path d="M690 755l72-30v200l-72 32z" fill="#14706f" />
        <path d="M855 715l213-93v180l-213 101z" fill="#178284" />
        <path d="M870 732l180-78v138l-180 88z" fill="#707173" />
        <path d="M945 700l105-45v80z" fill="#858789" />
        <path d="M859 900V718l207-91" fill="none" stroke="#a8e8e8" strokeWidth="3" />
        <path d="M765 755l40 5 20-12M440 795l20 8 12-10" stroke="#c5c5c5" fill="none" strokeWidth="3" />
      </g>
      {[
        [842, 268],
        [671, 348],
        [412, 513],
      ].map(([x, y]) => (
        <g key={x}>
          <path d={`M${x - 32} ${y}l30-18 34 15-28 21z`} fill="#fff" stroke="#222" strokeWidth="2" />
          <path d={`M${x - 10} ${y}l8 6 10-8`} fill="none" stroke="#555" strokeWidth="2" />
        </g>
      ))}
      <g stroke="#2f4f70" strokeWidth="2">
        <path d="M1390 173l70-23 66 27-71 31z" fill="#6788a8" />
        <path d="M1390 173l65 35-3 117-55-50z" fill="#55799b" />
        <path d="M1455 208l71-31-8 101-66 47z" fill="#4e7193" />
        <path d="M1397 275l58-32 63 35" fill="none" opacity=".6" />
      </g>
      <path d="M126 985h6v60h-6z" fill="#b8441c" />
      <path d="M129 943l11 47h-22z" fill="#f0561c" />
      <path d="M129 1048L72 1012l30 0 6 14zM129 1048l-70 31 36-2 4-14z" fill="#555" stroke="#444" strokeWidth="4" />
      <ellipse cx="129" cy="1047" rx="11" ry="13" fill="#555" />
    </g>
    <g className="font-['Liberation_Serif',serif]" fontSize="12" fill="#111" textAnchor="middle">
      <text x="51" y="277">Z</text>
      <text x="28" y="298">X</text>
      <text x="23" y="321">Y</text>
    </g>
    <g fontSize="10" fill="#d5e3ef" textAnchor="middle">
      <text x="595" y="51">前</text>
      <text x="623" y="52">右</text>
      <text x="611" y="27" fontSize="8">
        顶
      </text>
    </g>
  </svg>
);

const View3D = () => (
  <section className="mt-2 flex min-h-0 flex-1 flex-col border border-[#d5d5d5]">
    <div className="flex h-[23px] shrink-0 items-center gap-1 pr-[3px] pl-[4px] text-xs text-[#444]">
      <Pencils color="#888" />
      <h2>3D视图</h2>
      <div className="mx-1 h-[9px] flex-1 bg-[radial-gradient(#c2c2c2_1px,transparent_1px)] bg-[length:4px_4px]" />
      <button aria-label="菜单">
        <Caret />
      </button>
      <button aria-label="固定3D视图" className="ml-[3px]">
        <Pin />
      </button>
      <button aria-label="关闭3D视图">
        <LuX size={14} />
      </button>
    </div>
    <div className="min-h-0 flex-1 overflow-hidden bg-[linear-gradient(#659fce,#74a9d3_12%,#a3c8e4_30%,#dfecf6_50%,#fdfdfe_62%,#fdfdfd_80%,#f3f3f3)]">
      <House />
    </div>
    <div className="flex h-[23px] shrink-0 bg-[#e4e4e4] pb-px">
      <FloorArrows />
      <FloorSelect
        value="可见的楼层"
        width="w-[125px]"
        padding="pl-[13px]"
        icon={
          <Ic w={16} h={16}>
            <path d="M1 6h9v9H1z" fill="#5a6f9a" />
            <path d="M3 6v9M6 6v9M1 9h9M1 12h9" stroke="#dde4f3" />
            <path d="M11 15V2M9 4l2-3 2 3M11 15h4M14 2v12" stroke="#c79a2c" strokeWidth="1.5" />
          </Ic>
        }
      />
      <LayerTabs layers={viewLayers} />
      <span className="ml-auto flex items-center pr-[5px]">
        <Caret color="#111" />
      </span>
    </div>
    <footer className="flex h-[23px] shrink-0 items-center bg-[#ebebeb] pr-4 pl-[9px] text-xs text-[#f5f5f5]">
      <Warning />
      <div className="ml-auto flex items-center divide-x divide-[#f5f5f5] leading-[14px]">
        <button className="pr-[5px]">定向线</button>
        <button className="px-[6px] text-[#efefef]">上锁</button>
        <button className="px-[5px] text-[#efefef]">栅格</button>
        <button className="px-[6px]">自动</button>
        <button className="px-[6px] text-[#efefef]">重复</button>
      </div>
      <span className="ml-[12px]">
        <Caret color="#f8f8f8" />
      </span>
    </footer>
  </section>
);

const App = () => {
  return (
    <div className="flex h-screen flex-col overflow-hidden bg-[#f1f1f1] font-['Open_Sans','Noto_Sans_CJK_SC',sans-serif]">
      <div className="h-[19px] shrink-0 bg-black" />
      <Header />
      <main className="relative grid min-h-0 flex-1 grid-cols-[1248fr_651fr] gap-[7px] px-[7px] pb-[6px]">
        <EditorPane />
        <div className="flex min-h-0 min-w-0 flex-col">
          <PropertiesPane />
          <View3D />
        </div>
        <div className="absolute top-[125px] right-0 flex h-[60px] w-[10px] flex-col items-end justify-center gap-[2px] rounded-l bg-[#45464f] pr-px">
          {Array.from({ length: 14 }, (_, i) => (
            <span key={i} className={clsx("h-px w-[5px]", i > 8 ? "bg-[#6fd0a8]" : "bg-[#6c6d78]")} />
          ))}
        </div>
      </main>
      <div className="h-5 shrink-0 bg-black" />
    </div>
  );
};

export default App;
